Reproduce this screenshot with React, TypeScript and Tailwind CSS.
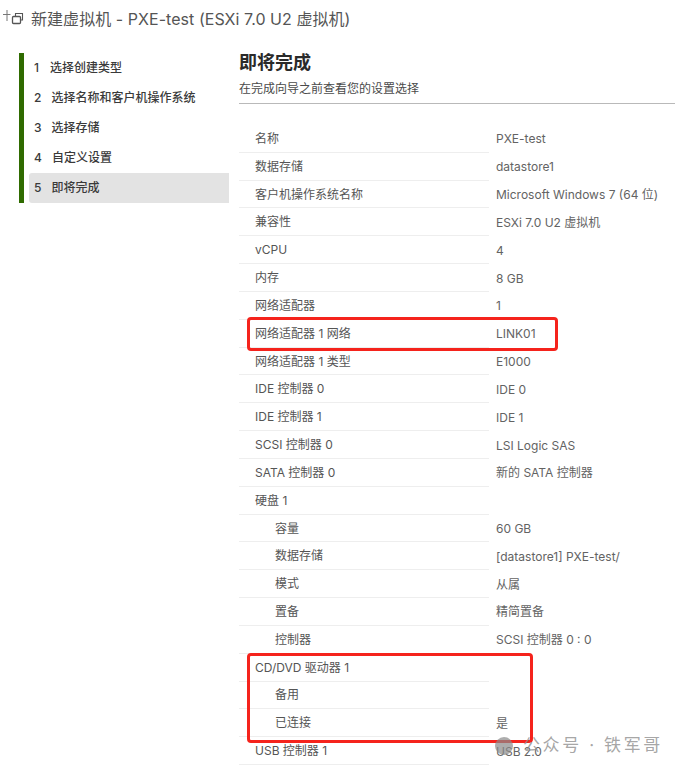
const FONT = "font-['Inter','Noto_Sans_CJK_SC',sans-serif]";

const steps = [
  ["1", "选择创建类型", "gap-[11px]"],
  ["2", "选择名称和客户机操作系统", "gap-[10px]"],
  ["3", "选择存储", "gap-[10px]"],
  ["4", "自定义设置", "gap-[10px]"],
  ["5", "即将完成", "gap-[10px]"],
];

const rows: [string, string, boolean?][] = [
  ["名称", "PXE-test"],
  ["数据存储", "datastore1"],
  ["客户机操作系统名称", "Microsoft Windows 7 (64 位)"],
  ["兼容性", "ESXi 7.0 U2 虚拟机"],
  ["vCPU", "4"],
  ["内存", "8 GB"],
  ["网络适配器", "1"],
  ["网络适配器 1 网络", "LINK01"],
  ["网络适配器 1 类型", "E1000"],
  ["IDE 控制器 0", "IDE 0"],
  ["IDE 控制器 1", "IDE 1"],
  ["SCSI 控制器 0", "LSI Logic SAS"],
  ["SATA 控制器 0", "新的 SATA 控制器"],
  ["硬盘 1", ""],
  ["容量", "60 GB", true],
  ["数据存储", "[datastore1] PXE-test/", true],
  ["模式", "从属", true],
  ["置备", "精简置备", true],
  ["控制器", "SCSI 控制器 0 : 0", true],
  ["CD/DVD 驱动器 1", ""],
  ["备用", "", true],
  ["已连接", "是", true],
  ["USB 控制器 1", "USB 2.0"],
];

function WizardIcon() {
  return (
    <svg width="24" height="20" viewBox="0 0 24 20" fill="none" stroke="#555" strokeWidth="1" className="shrink-0">
      <path d="M6 2v11M2 6.5h7.5" stroke="#777" />
      <rect x="11.5" y="8.5" width="8" height="7" rx="1" strokeWidth="1.3" />
      <path d="M14.5 8V5.5h7V12H20" strokeWidth="1.1" />
    </svg>
  );
}

export default function App() {
  return (
    <div className={`relative w-[678px] h-[774px] overflow-hidden bg-white ${FONT} text-[#444]`}>
      <div className="flex items-center h-[36px] pl-[1px] gap-[6px]">
        <WizardIcon />
        <span className="text-[16px] tracking-[0.05px] pt-[1px] text-[#555]">新建虚拟机 - PXE-test (ESXi 7.0 U2 虚拟机)</span>
      </div>
      <div className="flex mt-[17px] pl-[19px]">
        <nav className="w-[210px] h-[150px] border-l-[5px] border-[#2f6b00] pl-[5px] shrink-0">
          {steps.map(([n, t, gap], i) => (
            <div
              key={n}
              className={`flex items-center h-[30px] pl-[5px] ${gap} text-[12px] font-medium text-[#3a3a3a] ${i === 4 ? "bg-[#e3e3e3] rounded-l-[3px]" : ""}`}
            >
              <span>{n}</span>
              <span>{t}</span>
            </div>
          ))}
        </nav>
        <main className="ml-[10px] w-[436px] -mt-[2px]">
          <h1 className="text-[18px] leading-[24px] font-bold text-[#2a2a2a]">即将完成</h1>
          <p className="mt-[5px] text-[12px] leading-[18px] text-[#4a4a4a] pb-[5px] border-b border-[#b9b9b9]">
            在完成向导之前查看您的设置选择
          </p>
          <div className="mt-[21px]">
            {rows.map(([k, v, indent], i) => (
              <div key={i} className="flex h-[27.83px] text-[12px]">
                <div className={`w-[250px] flex items-center pt-[1px] border-b border-[#eeeeee] ${indent ? "pl-[36px]" : "pl-[16px]"} text-[#555]`}>
                  {k}
                </div>
                <div className="flex items-center pt-[1px] pl-[7px] text-[#636363] whitespace-nowrap">{v}</div>
              </div>
            ))}
          </div>
        </main>
      </div>

      <div className="absolute left-[247px] top-[317px] w-[311px] h-[34px] border-[3px] border-[#f5231c] rounded-[4px]" />
      <div className="absolute left-[247px] top-[653px] w-[286px] h-[90px] border-[3px] border-[#f5231c] rounded-[4px]" />

      <div className="absolute left-[495px] top-[735px] flex items-center h-[22px] text-[17px] tracking-[2.6px] text-[#8f8f8f]/80 whitespace-nowrap">
        <span className="w-[18px] h-[18px] rounded-full bg-[#8a8a8a]/70 mr-[10px] shrink-0" />
        <span>公众号 · 铁军哥</span>
      </div>
    </div>
  );
}
